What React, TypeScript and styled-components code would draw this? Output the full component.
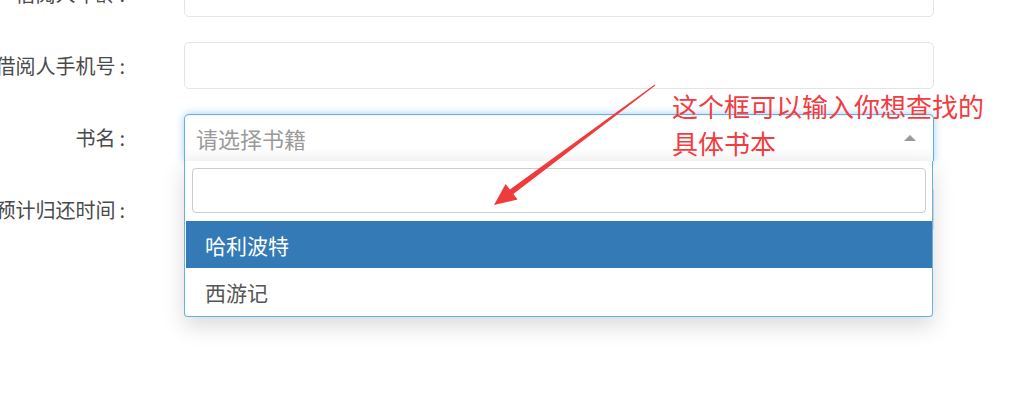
import React from "react";
import styled, { createGlobalStyle } from "styled-components";

const GlobalStyle = createGlobalStyle`
  html, body {
    margin: 0;
    padding: 0;
    background: #ffffff;
    overflow: hidden;
  }
  body {
    font-family: "Noto Sans CJK SC", "Noto Sans", sans-serif;
  }
  * { box-sizing: border-box; }
`;

const Page = styled.div`
  position: relative;
  width: 1017px;
  height: 404px;
  overflow: hidden;
  background: #fff;
`;

const Form = styled.form`
  display: flex;
  flex-direction: column;
  gap: 25px;
  margin: -30px 0 0 0;
`;

const Row = styled.div`
  display: grid;
  grid-template-columns: 125px 750px;
  column-gap: 59px;
  align-items: center;
`;

const Label = styled.label`
  display: flex;
  justify-content: flex-end;
  white-space: nowrap;
  font-size: 20px;
  line-height: 28px;
  color: #4a4a4a;
`;

const Colon = styled.span`
  padding-left: 4px;
`;

const TextInput = styled.input`
  display: block;
  width: 100%;
  height: 47px;
  border: 1px solid #e4e4e4;
  border-radius: 5px;
  background: #fff;
  outline: none;
  font: inherit;
`;

const SelectWrap = styled.div`
  position: relative;
  height: 47px;
`;

const SelectHeader = styled.div`
  height: 47px;
  display: flex;
  align-items: center;
  justify-content: space-between;
  padding: 0 17px 0 11px;
  border: 1px solid #66afe9;
  border-bottom: none;
  border-radius: 5px 5px 0 0;
  background: linear-gradient(to bottom, #ffffff 72%, #f8f8f8 100%);
  box-shadow: inset 0 1px 1px rgba(0, 0, 0, 0.05), 0 0 9px rgba(102, 175, 233, 0.6);
`;

const Placeholder = styled.span`
  font-size: 22px;
  color: #9a9a9a;
  line-height: 28px;
`;

const Caret = styled.span<{ $open: boolean }>`
  width: 0;
  height: 0;
  border-left: 6px solid transparent;
  border-right: 6px solid transparent;
  ${(p) =>
    p.$open
      ? "border-bottom: 6px solid #999;"
      : "border-top: 6px solid #999;"}
`;

const Dropdown = styled.div`
  position: absolute;
  top: 47px;
  left: 0;
  right: 1px;
  background: #fff;
  border: 1px solid #66afe9;
  border-top: none;
  border-radius: 0 0 4px 4px;
  box-shadow: 0 9px 22px rgba(0, 0, 0, 0.15);
  z-index: 2;
`;

const SearchBox = styled.div`
  padding: 7px 6px 8px 7px;
`;

const SearchInput = styled.input`
  display: block;
  width: 100%;
  height: 45px;
  border: 1px solid #cccccc;
  border-radius: 4px;
  outline: none;
  background: #fff;
  font: inherit;
`;

const OptionList = styled.ul`
  list-style: none;
  margin: 0;
  padding: 0 0 1px 1px;
`;

const Option = styled.li<{ $active?: boolean }>`
  height: 47px;
  display: flex;
  align-items: center;
  padding-left: 19px;
  font-size: 21px;
  color: ${(p) => (p.$active ? "#ffffff" : "#555555")};
  background: ${(p) => (p.$active ? "#337ab7" : "transparent")};
`;

const Note = styled.div`
  position: absolute;
  left: 672px;
  top: 87px;
  width: 340px;
  font-size: 26px;
  line-height: 37px;
  color: #f23c3f;
  z-index: 5;
  pointer-events: none;
`;

const ArrowLayer = styled.svg`
  position: absolute;
  left: 0;
  top: 0;
  z-index: 4;
  pointer-events: none;
`;

export default function App() {
  return (
    <>
      <GlobalStyle />
      <Page>
        <Form onSubmit={(e) => e.preventDefault()}>
          <Row>
            <Label>
              借阅人年龄<Colon>:</Colon>
            </Label>
            <TextInput type="text" />
          </Row>
          <Row>
            <Label>
              借阅人手机号<Colon>:</Colon>
            </Label>
            <TextInput type="text" />
          </Row>
          <Row>
            <Label>
              书名<Colon>:</Colon>
            </Label>
            <SelectWrap>
              <SelectHeader>
                <Placeholder>请选择书籍</Placeholder>
                <Caret $open />
              </SelectHeader>
              <Dropdown>
                <SearchBox>
                  <SearchInput type="search" />
                </SearchBox>
                <OptionList>
                  <Option $active>哈利波特</Option>
                  <Option>西游记</Option>
                </OptionList>
              </Dropdown>
            </SelectWrap>
          </Row>
          <Row>
            <Label>
              预计归还时间<Colon>:</Colon>
            </Label>
            <TextInput type="text" />
          </Row>
        </Form>
        <ArrowLayer width="1017" height="404" viewBox="0 0 1017 404">
          <polygon
            fill="#f03a3c"
            points="654.7,84.6 509.9,189.6 505.6,184.0 494,205 517.6,199.6 513.3,194.0 655.3,85.4"
          />
        </ArrowLayer>
        <Note>
          这个框可以输入你想查找的
          <br />
          具体书本
        </Note>
      </Page>
    </>
  );
}
